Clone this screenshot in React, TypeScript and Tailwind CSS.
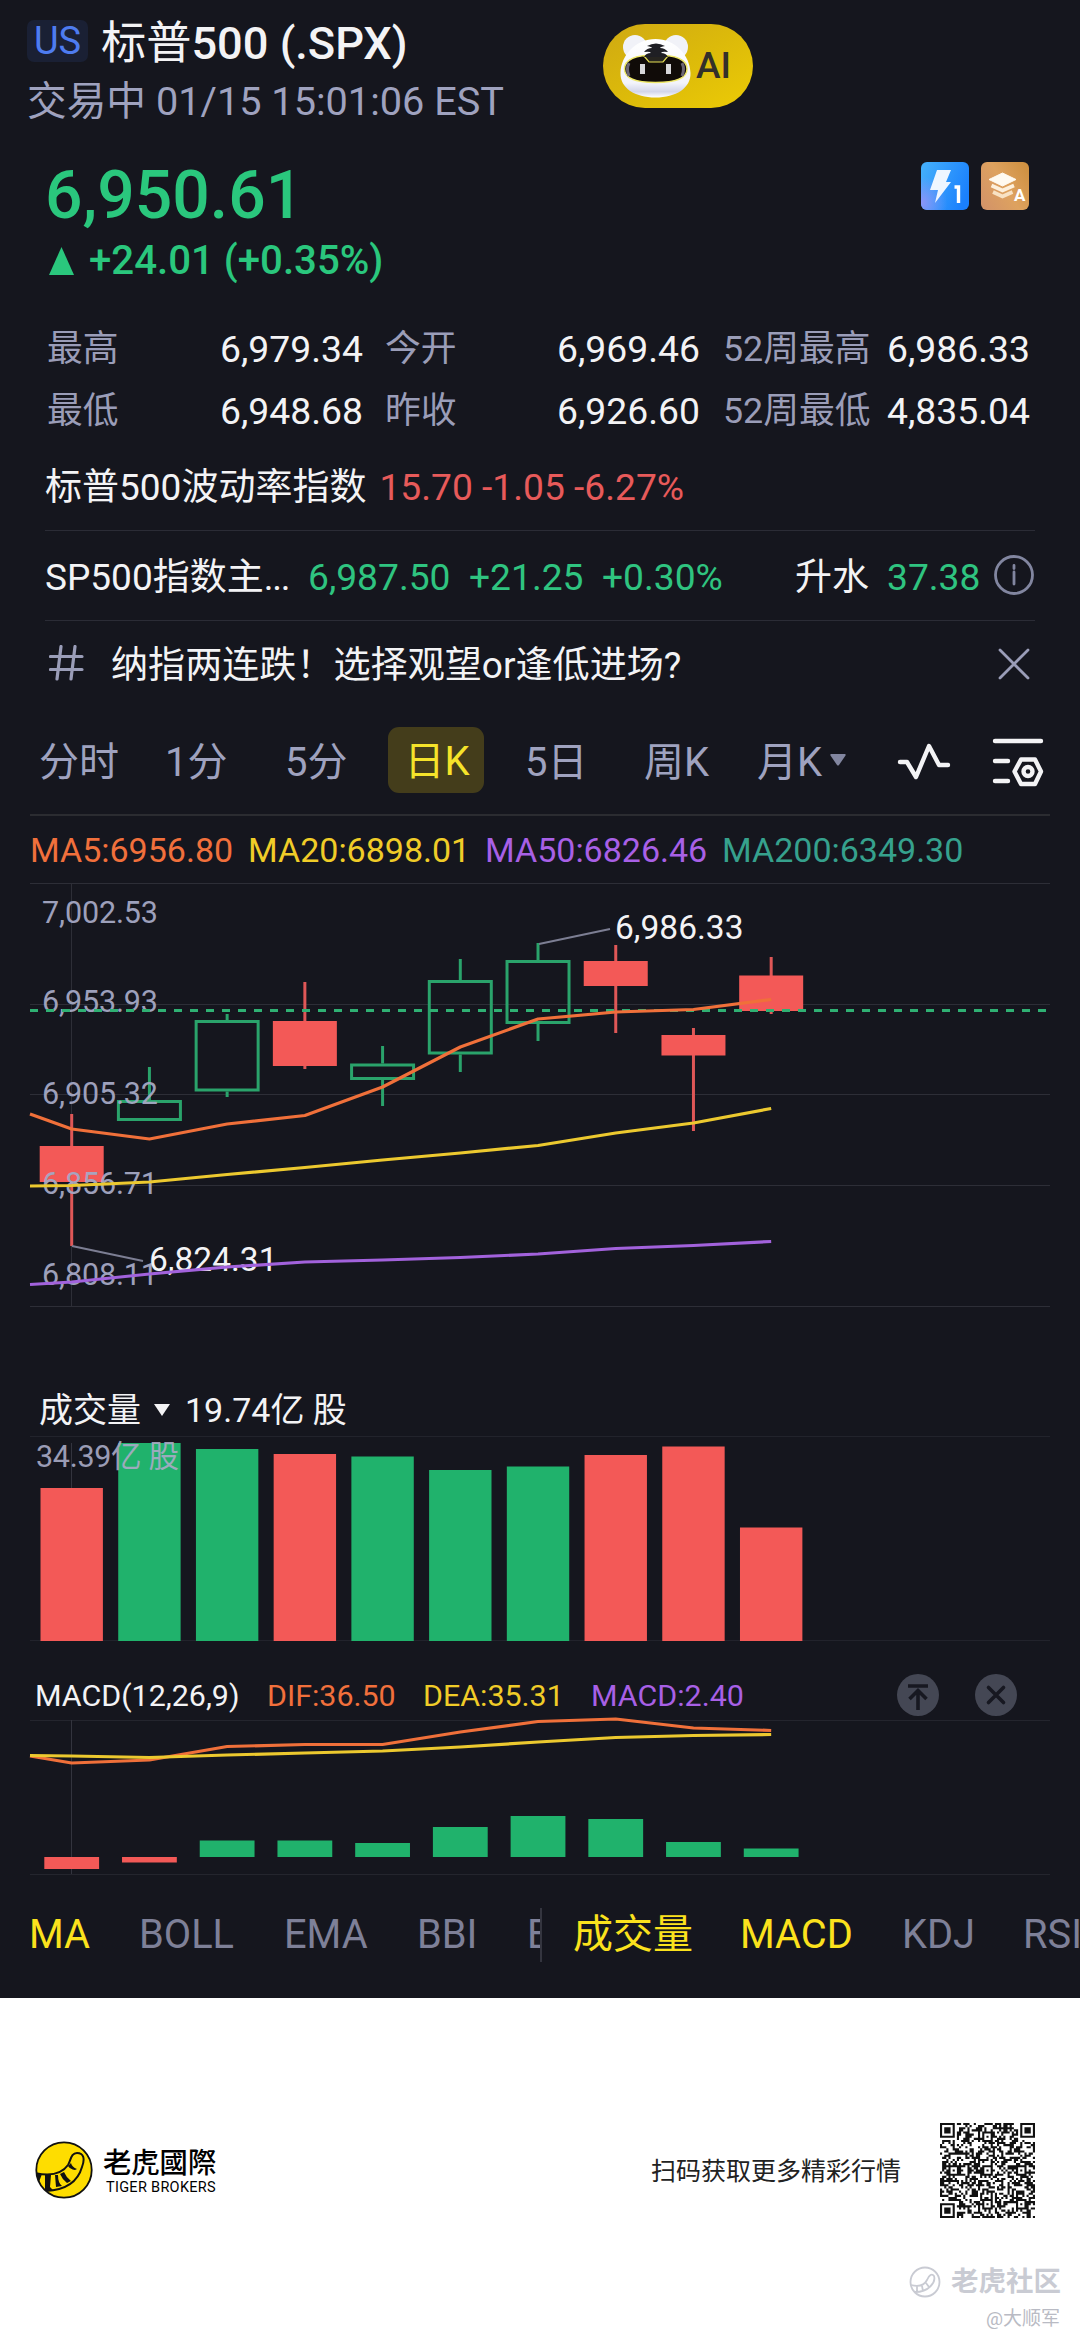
import React from "react";

const ROBOTO = "font-['Roboto','Noto_Sans_CJK_SC',sans-serif]";

const GREEN = "#20b26c";
const RED = "#f35957";
const x0 = 71.7;
const pitch = 77.72;
const cx = (i: number) => x0 + pitch * i;

type Candle = { up: boolean; top: number; bottom: number; high: number; low: number };

const candles: Candle[] = [
  { up: false, top: 1146, bottom: 1182, high: 1114, low: 1246 },
  { up: true, top: 1100, bottom: 1121, high: 1067, low: 1121 },
  { up: true, top: 1020, bottom: 1091.5, high: 1014, low: 1097 },
  { up: false, top: 1021, bottom: 1066, high: 982, low: 1069 },
  { up: true, top: 1063.5, bottom: 1080, high: 1046, low: 1106 },
  { up: true, top: 980, bottom: 1054.5, high: 959, low: 1072 },
  { up: true, top: 960, bottom: 1024, high: 943, low: 1041 },
  { up: false, top: 961, bottom: 986, high: 945, low: 1033 },
  { up: false, top: 1035, bottom: 1055.5, high: 1028, low: 1131 },
  { up: false, top: 975.5, bottom: 1011, high: 957, low: 1014 },
];

const linePoints = (first: number, ys: number[]) =>
  [`30,${first}`, ...ys.map((y, i) => `${cx(i)},${y}`)].join(" ");

const ma5 = linePoints(1114, [1129, 1139, 1124, 1115.5, 1087, 1047, 1019, 1012, 1009.5, 999.5]);
const ma20 = linePoints(1186, [1185.5, 1182, 1174.5, 1167.5, 1160, 1153, 1145.5, 1133, 1123, 1108.5]);
const ma50 = linePoints(1284.5, [1282, 1274, 1267, 1262, 1260, 1257.5, 1254, 1248.5, 1245.5, 1241.5]);
const dif = linePoints(1756, [1763, 1760, 1746.5, 1744.5, 1744.5, 1732, 1721.5, 1719, 1728, 1730.5]);
const dea = linePoints(1755.5, [1756, 1757.5, 1755, 1753, 1751, 1747, 1742, 1737.5, 1735.5, 1734.5]);

const volumes: [boolean, number][] = [
  [false, 1488], [true, 1443], [true, 1449], [false, 1454], [true, 1456.5],
  [true, 1470], [true, 1466.5], [false, 1455], [false, 1446.5], [false, 1527.5],
];

const histogram: [number, number][] = [
  [1857, 1869], [1857, 1862.5], [1840.5, 1857], [1840.5, 1857], [1843, 1857],
  [1827, 1857], [1816, 1857], [1819, 1857], [1842, 1857], [1848.5, 1857],
];

const axis: [string, number][] = [
  ["7,002.53", 923], ["6,953.93", 1012], ["6,905.32", 1103.5], ["6,856.71", 1194], ["6,808.11", 1285],
];

function PriceChart() {
  return (
    <svg className="block" width="1080" height="426" viewBox="0 882 1080 426">
      <g stroke="#2d2e37" strokeWidth="1">
        {[883.5, 1004.5, 1094.5, 1185.5, 1306.5].map((y) => (
          <line key={y} x1="30" x2="1050" y1={y} y2={y} />
        ))}
        <line x1="71.5" x2="71.5" y1="883" y2="1306" />
      </g>
      {candles.map((c, i) => {
        const x = cx(i);
        return c.up ? (
          <g key={i} stroke="#2aa36b" strokeWidth="3" fill="none">
            <line x1={x} x2={x} y1={c.high} y2={c.top} />
            <line x1={x} x2={x} y1={c.bottom} y2={c.low} />
            <rect x={x - 31} y={c.top + 1.5} width="62" height={c.bottom - c.top - 3} />
          </g>
        ) : (
          <g key={i}>
            <line x1={x} x2={x} y1={c.high} y2={c.low} stroke="#df5757" strokeWidth="3" />
            <rect x={x - 32} y={c.top} width="64" height={c.bottom - c.top} fill={RED} />
          </g>
        );
      })}
      <g fontFamily="Roboto" fontSize="30.5" fill="#a5a8c4" opacity="0.95">
        {axis.map(([t, y]) => (
          <text key={t} x="42" y={y} textLength="116">{t}</text>
        ))}
      </g>
      <line x1="30" x2="1049" y1="1010.5" y2="1010.5" stroke="#2fb073" strokeWidth="3" strokeDasharray="8 8" />
      <g stroke="#7c7e93" strokeWidth="2">
        <line x1="539" y1="944" x2="610" y2="929" />
        <line x1="72" y1="1246" x2="143" y2="1261" />
      </g>
      <g fontFamily="Roboto" fontSize="33.5" fill="#f3f3f5">
        <text x="615" y="938.5" textLength="128.5">6,986.33</text>
        <text x="149" y="1270.5" textLength="128.5">6,824.31</text>
      </g>
      <g fill="none" strokeWidth="3.2" strokeLinejoin="round">
        <polyline points={ma5} stroke="#f0703a" />
        <polyline points={ma20} stroke="#ecc92f" />
        <polyline points={ma50} stroke="#a262dc" />
      </g>
    </svg>
  );
}

function VolumeChart() {
  return (
    <svg className="block" width="1080" height="206" viewBox="0 1436 1080 206">
      <g stroke="#22232c" strokeWidth="1">
        <line x1="30" x2="1050" y1="1436.5" y2="1436.5" />
        <line x1="30" x2="1050" y1="1640.5" y2="1640.5" />
        <line x1="71.5" x2="71.5" y1="1443" y2="1488" stroke="#33343e" />
      </g>
      {volumes.map(([up, top], i) => (
        <rect key={i} x={cx(i) - 31.2} y={top} width="62.4" height={1641 - top} fill={up ? GREEN : RED} />
      ))}
      <text x="36" y="1467" fontSize="30.5" fill="#a9abc6" opacity="0.9" textLength="143" fontFamily="Roboto, 'Noto Sans CJK SC'">
        34.39亿 股
      </text>
    </svg>
  );
}

function MacdChart() {
  return (
    <svg className="block overflow-visible" width="1080" height="156" viewBox="0 1720 1080 156">
      <g stroke="#24252e" strokeWidth="1">
        <line x1="30" x2="1050" y1="1720.5" y2="1720.5" />
        <line x1="30" x2="1050" y1="1874.5" y2="1874.5" />
        <line x1="71.5" x2="71.5" y1="1720" y2="1874" stroke="#33343e" />
      </g>
      {histogram.map(([a, b], i) => (
        <rect key={i} x={cx(i) - 27.4} y={a} width="54.8" height={b - a} fill={i < 2 ? RED : GREEN} />
      ))}
      <g fill="none" strokeWidth="3.2" strokeLinejoin="round">
        <polyline points={dif} stroke="#f0703a" />
        <polyline points={dea} stroke="#ecc92f" />
      </g>
    </svg>
  );
}

function TigerBot() {
  return (
    <svg className="ml-[16px] shrink-0" width="74" height="66" viewBox="0 0 74 66">
      <defs>
        <linearGradient id="face" x1="0" y1="0" x2="0" y2="1">
          <stop offset="0" stopColor="#fff" />
          <stop offset="0.75" stopColor="#f3f4fb" />
          <stop offset="0.9" stopColor="#d3d6ea" />
          <stop offset="1" stopColor="#fff" />
        </linearGradient>
      </defs>
      <circle cx="16" cy="14" r="12" fill="#f1f2f8" />
      <circle cx="57" cy="14" r="12" fill="#f1f2f8" />
      <path d="M36.500 6C56 6 71 22 71.500 40C72 55 57 64.500 36.500 64.500C16 64.500 1 55 1.500 40C2 22 17 6 36.500 6Z" fill="url(#face)" />
      <path d="M36.500 22C58 22 68 27 68 36C68 45 56 49.500 36.500 49.500C17 49.500 5.500 45 5.500 36C5.500 27 15 22 36.500 22Z" fill="#100b08" stroke="#efe96a" strokeWidth="1.500" />
      <path d="M10 30Q7 36 10 43M63 30Q66 36 63 43" stroke="#6b6674" strokeWidth="3" fill="none" />
      <path d="M25 23L30 29H44L49 23Z" fill="#26241f" stroke="#e5df55" strokeWidth="1.200" />
      <path d="M28 13Q37 8 46 13Q41 14 41 15Q46 15 49 19Q43 18 42 20Q47 20 49 24H25Q27 20 32 20Q31 18 25 19Q28 15 33 15Q33 14 28 13Z" fill="#1f1f24" />
      <rect x="21" y="31" width="5" height="10" fill="#d7d7da" />
      <rect x="47" y="31" width="5" height="10" fill="#d7d7da" />
    </svg>
  );
}

function LightningBadge() {
  return (
    <svg width="48" height="48" viewBox="0 0 48 48">
      <defs>
        <linearGradient id="blue" x1="0" y1="0.2" x2="1" y2="0.6">
          <stop offset="0" stopColor="#43aefb" />
          <stop offset="1" stopColor="#1a80fd" />
        </linearGradient>
        <radialGradient id="violet" cx="0" cy="0.85" r="0.55">
          <stop offset="0" stopColor="#8c94f8" />
          <stop offset="1" stopColor="#8c94f8" stopOpacity="0" />
        </radialGradient>
      </defs>
      <rect width="48" height="48" rx="6" fill="url(#blue)" />
      <rect width="48" height="48" rx="6" fill="url(#violet)" />
      <path d="M16 8H30L25 20H30L14 41L17 28H9Z" fill="#eef6ff" />
      <path d="M33.500 25H37.500V41" fill="none" stroke="#fff" strokeWidth="3.400" />
    </svg>
  );
}

function LayersBadge() {
  return (
    <svg width="48" height="48" viewBox="0 0 48 48">
      <defs>
        <linearGradient id="amber" x1="0" y1="0.8" x2="1" y2="0.2">
          <stop offset="0" stopColor="#d39468" />
          <stop offset="0.5" stopColor="#dea25f" />
          <stop offset="1" stopColor="#cf9142" />
        </linearGradient>
      </defs>
      <rect width="48" height="48" rx="6" fill="url(#amber)" />
      <path d="M21.500 11L35 17.500L21.500 24L8 17.500Z" fill="#fffaf0" stroke="#fffaf0" strokeLinejoin="round" />
      <path d="M10.500 23.500L21.500 28.500L33 23.500" fill="none" stroke="#fdf0dc" strokeWidth="3.600" />
      <path d="M12 30L21.500 34.500L31.500 30" fill="none" stroke="#f8e2c4" strokeWidth="3.600" />
      <text x="33" y="39" fontFamily="Roboto" fontWeight="700" fontSize="17" fill="#fff">A</text>
    </svg>
  );
}

function Stat({ label, value, width }: { label: string; value: string; width: string }) {
  return (
    <div className={`flex items-center justify-between ${width}`}>
      <span className="text-[35.8px] text-[#9a9db8]">{label}</span>
      <span className="text-[#f3f3f5]">{value}</span>
    </div>
  );
}

const SIZE = 45;

function buildQr(): boolean[][] {
  let seed = 20260115;
  const next = () => {
    seed = (seed * 1103515245 + 12345) % 2147483648;
    return seed / 2147483648;
  };
  const m = Array.from({ length: SIZE }, () => Array.from({ length: SIZE }, () => next() > 0.48));
  const square = (r: number, c: number, n: number, quiet: number) => {
    for (let y = -quiet; y < n + quiet; y++)
      for (let x = -quiet; x < n + quiet; x++) {
        const yy = r + y;
        const xx = c + x;
        if (yy < 0 || xx < 0 || yy >= SIZE || xx >= SIZE) continue;
        const d = Math.min(x, y, n - 1 - x, n - 1 - y);
        m[yy][xx] = d === 0 || d >= 2;
      }
  };
  for (const [r, c] of [[6, 22], [22, 6], [22, 22], [22, 38], [38, 22], [38, 38]]) {
    square(r - 2, c - 2, 5, 0);
  }
  square(0, 0, 7, 1);
  square(0, SIZE - 7, 7, 1);
  square(SIZE - 7, 0, 7, 1);
  return m;
}

const qrPath = buildQr()
  .flatMap((row, y) => row.map((on, x) => (on ? `M${x} ${y}h1v1h-1z` : "")))
  .join("");

function BrandLogo() {
  return (
    <svg className="shrink-0" width="58" height="60" viewBox="0 0 58 60">
      <clipPath id="disc"><circle cx="29" cy="30" r="28" /></clipPath>
      <circle cx="29" cy="30" r="28" fill="#fedd00" />
      <g clipPath="url(#disc)">
        <path d="M0 33Q24 38 33 25C36 20 36 13 42 13C49 13 50 19 47 27C43 41 31 50 11 51" fill="none" stroke="#111" strokeWidth="2" />
        <path d="M1 33L7 34L4 42ZM10 35L16 35L15 47L18 50L10 51ZM20 35L23 35Q23 43 27 46L21 47ZM25 34L29 32Q31 37 36 41L32 43Q27 39 25 34ZM33 26L36 23Q37 27 42 29L40 30Q35 29 33 26Z" fill="#111" />
      </g>
      <circle cx="29" cy="30" r="27.700" fill="none" stroke="#111" strokeWidth="1.800" />
    </svg>
  );
}

export default function App() {
  return (
    <div className={`w-[1080px] h-[2343px] overflow-hidden bg-white whitespace-nowrap ${ROBOTO}`}>
      <main className="h-[1998px] overflow-hidden bg-[#15161e]">
        <header className="flex h-[128px]">
          <div className="w-[603px] pt-[14px]">
            <div className="flex h-[60px] items-center pl-[27px]">
              <span className="-mt-[6px] flex h-[42px] w-[61px] items-center justify-center rounded-[7px] bg-[#1a2034] text-[38px] leading-none text-[#4e7cf0]">US</span>
              <h1 className="ml-[13px] text-[45.2px] font-medium leading-[60px] text-[#f3f3f5]">
                <span className="font-normal">标普</span>500 (.SPX)
              </h1>
            </div>
            <div className="pl-[27px] pt-[1px] text-[39.7px] leading-[54px] text-[#9fa2bf]">交易中 01/15 15:01:06 EST</div>
          </div>
          <div className="mt-[24px] flex h-[84px] w-[150px] items-center rounded-full bg-linear-to-br from-[#cfa912] via-[#dcba0a] to-[#eccb05]">
            <TigerBot />
            <span className="ml-[3px] text-[37px] font-medium text-[#33302a]">AI</span>
          </div>
        </header>

        <section className="flex h-[157px] justify-between pl-[46px] pr-[51px] text-[#2ac77d]">
          <div className="pt-[27px]">
            <div className="-ml-[1px] text-[66px] font-medium leading-[81px]">6,950.61</div>
            <div className="flex items-center text-[40.2px] font-medium leading-[49px]">
              <svg className="ml-[3px] mr-[15px]" width="25" height="28" viewBox="0 0 25 28"><path d="M12.500 0L25 28H0Z" fill="currentColor" /></svg>
              +24.01 (+0.35%)
            </div>
          </div>
          <div className="flex gap-3 pt-[34px]">
            <LightningBadge />
            <LayersBadge />
          </div>
        </section>

        <section className="pl-[47px] pt-[33px] text-[37.3px] leading-[62px]">
          <div className="flex">
            <Stat label="最高" value="6,979.34" width="w-[316px] mr-[22px]" />
            <Stat label="今开" value="6,969.46" width="w-[315px] mr-[23px]" />
            <Stat label="52周最高" value="6,986.33" width="w-[307px]" />
          </div>
          <div className="flex">
            <Stat label="最低" value="6,948.68" width="w-[316px] mr-[22px]" />
            <Stat label="昨收" value="6,926.60" width="w-[315px] mr-[23px]" />
            <Stat label="52周最低" value="4,835.04" width="w-[307px]" />
          </div>
        </section>

        <section className="-mt-[1px] mx-[45px] text-[37px] text-[#f3f3f5]">
          <div className="flex h-[90px] items-center border-b border-[#2b2c36] pt-[4px]">
            <span>标普500波动率指数</span>
            <span className="ml-[13px] text-[37.2px] text-[#e75a5a]">15.70 -1.05 -6.27%</span>
          </div>
          <div className="flex h-[90px] items-center border-b border-[#2b2c36] pt-[4px]">
            <span className="w-[263px]">SP500指数主<span className="tracking-[-1.2px]">...</span></span>
            <span className="w-[161px] text-[37.2px] text-[#2fc480]">6,987.50</span>
            <span className="w-[133px] text-[37.2px] text-[#2fc480]">+21.25</span>
            <span className="w-[193px] text-[37.2px] text-[#2fc480]">+0.30%</span>
            <span className="w-[92px]">升水</span>
            <span className="w-[107px] text-[37.2px] text-[#2fc480]">37.38</span>
            <svg width="40" height="40" viewBox="0 0 40 40" fill="none" stroke="#8286a0" strokeWidth="2.800" className="-mt-[5px]">
              <circle cx="20" cy="20" r="18.500" />
              <path d="M20 17V29M20 10.500V13.500" strokeLinecap="round" />
            </svg>
          </div>
          <div className="flex h-[90px] items-center">
            <svg className="-mt-[6px] ml-[4px]" width="35" height="36" viewBox="0 0 35 36" fill="none" stroke="#9a9db8" strokeWidth="3.200" strokeLinecap="round">
              <path d="M1.500 11.500H33M1.500 24.500H33M12 1.500L8 34M26 1.500L22 34" />
            </svg>
            <span className="ml-[27px] flex-1 text-[37.1px]">纳指两连跌！选择观望or逢低进场?</span>
            <svg className="-mt-[5px] mr-[5px]" width="32" height="32" viewBox="0 0 32 32" fill="none" stroke="#9a9db8" strokeWidth="2.800" strokeLinecap="round">
              <path d="M2 2L30 30M30 2L2 30" />
            </svg>
          </div>
        </section>

        <nav className="mx-[30px] flex h-[105px] items-center border-b-2 border-[#2b2c31] text-[40px] text-[#9fa2bf]">
          <span className="ml-[9px] w-[126px]">分时</span>
          <span className="w-[120px]">1分</span>
          <span className="w-[103px]">5分</span>
          <span className="-mt-[5px] flex h-[66px] w-[96px] items-center justify-center rounded-[11px] bg-[#443d1b] pt-[4px] pl-[2px] text-[#f5e32a]">日K</span>
          <span className="ml-[41px] w-[119px]">5日</span>
          <span className="w-[113px]">周K</span>
          <span className="w-[73px]">月K</span>
          <svg className="-mt-[6px]" width="16" height="12" viewBox="0 0 16 12"><path d="M1 0H15Q16 0 15.500 1.500L9 11Q8 12 7 11L.5 1.500Q0 0 1 0Z" fill="#8286a0" /></svg>
          <svg className="ml-[51px] -mt-[1px]" width="54" height="40" viewBox="0 0 54 40" fill="none" stroke="#f3f3f5" strokeWidth="4.400" strokeLinecap="round" strokeLinejoin="round">
            <path d="M3 20H10L19 35L32 4L42 23H51" />
          </svg>
          <svg className="ml-[41px] -mt-[2px]" width="52" height="52" viewBox="0 0 52 52" fill="none" stroke="#f3f3f5" strokeWidth="4.400" strokeLinecap="round" strokeLinejoin="round">
            <path d="M3 5H49M3 25H16M3 45H16" />
            <path d="M29 23.500H43L49 35.500L43 48H29L22.500 35.500Z" />
            <circle cx="36" cy="35.500" r="4.500" />
          </svg>
        </nav>

        <div className="flex h-[66px] items-center pl-[30px] pt-[2px] text-[34px]">
          <span className="w-[218px] text-[#f1703c]">MA5:6956.80</span>
          <span className="w-[237px] text-[#f0cc28]">MA20:6898.01</span>
          <span className="w-[237px] text-[#a860e6]">MA50:6826.46</span>
          <span className="text-[#36a18d]">MA200:6349.30</span>
        </div>
        <PriceChart />

        <div className="mt-[76px] flex h-[52px] items-center pl-[39px] text-[34px] text-[#f3f3f5]">
          <span>成交量</span>
          <svg className="ml-[13px] mr-[15px]" width="16" height="12" viewBox="0 0 16 12"><path d="M0 0H16L8 12Z" fill="currentColor" /></svg>
          <span className="pt-[1px]">19.74亿 股</span>
        </div>
        <VolumeChart />

        <div className="mt-[30px] flex h-[48px] items-center pl-[35px] text-[30.4px]">
          <span className="w-[232px] text-[#f3f3f5]">MACD(12,26,9)</span>
          <span className="w-[156px] text-[#f1703c]">DIF:36.50</span>
          <span className="w-[168px] text-[#f0cc28]">DEA:35.31</span>
          <span className="w-[306px] text-[#a860e6]">MACD:2.40</span>
          <svg className="-mt-[2px]" width="42" height="42" viewBox="0 0 42 42" fill="none" stroke="#171821" strokeWidth="3.600">
            <circle cx="21" cy="21" r="21" fill="#444754" stroke="none" />
            <path d="M11 12H31M21 36V17M12.500 25L21 16.500L29.500 25" />
          </svg>
          <svg className="-mt-[2px] ml-[36px]" width="42" height="42" viewBox="0 0 42 42" fill="none" stroke="#171821" strokeWidth="3.600" strokeLinecap="round">
            <circle cx="21" cy="21" r="21" fill="#444754" stroke="none" />
            <path d="M13.500 13.500L28.500 28.500M28.500 13.500L13.500 28.500" />
          </svg>
        </div>
        <MacdChart />

        <div className="flex h-[116px] items-center pt-[1px] text-[39.8px] text-[#7e8098]">
          <div className="flex h-[54px] w-[542px] items-center overflow-hidden border-r-2 border-[#34353f] pl-[29px]">
            <span className="w-[110px] shrink-0 text-[#fbe21d]">MA</span>
            <span className="w-[145px] shrink-0">BOLL</span>
            <span className="w-[133px] shrink-0">EMA</span>
            <span className="w-[110px] shrink-0">BBI</span>
            <span className="shrink-0">E</span>
          </div>
          <div className="flex w-[538px] overflow-hidden pl-[31px]">
            <span className="w-[167px] shrink-0 text-[40px] text-[#fbe21d]">成交量</span>
            <span className="w-[162px] shrink-0 text-[#fbe21d]">MACD</span>
            <span className="w-[121px] shrink-0">KDJ</span>
            <span className="shrink-0">RSI</span>
          </div>
        </div>
      </main>

      <footer className="h-[345px] pt-[124px]">
        <div className="flex h-[96px] items-center pl-[35px] pr-[45px]">
          <BrandLogo />
          <div className="ml-[10px] flex flex-col pt-[1px] text-black">
            <span className="text-[28.3px] leading-[34px] font-medium font-['Noto_Sans_CJK_TC',sans-serif]">老虎國際</span>
            <span className="pl-[3px] text-[14.5px] leading-[20px] tracking-[0.3px]">TIGER BROKERS</span>
          </div>
          <span className="ml-auto pt-[3px] text-[25px] text-[#222]">扫码获取更多精彩行情</span>
          <svg className="ml-[39px]" width="95" height="95" viewBox="0 0 45 45"><path d={qrPath} fill="#111" /></svg>
        </div>
        <div className="mt-[42px] flex h-[44px] items-center justify-end pr-[19px]">
          <svg width="32" height="32" viewBox="0 0 32 32" fill="none" stroke="#c9cbd3" strokeWidth="1.800">
            <circle cx="16" cy="16" r="14.500" />
            <path d="M2 19Q14 22 18 14C20 9 23 7 25 10C27 16 20 26 6 26M8 20V26M13 20L14 25M17 17L20 21" />
          </svg>
          <span className="ml-[10px] text-[27.5px] font-bold leading-[40px] text-[#c9cbd3]">老虎社区</span>
        </div>
        <div className="pr-[20px] pt-[2px] text-right text-[19px] leading-[26px] text-[#b9bbc4]">@大顺军</div>
      </footer>
    </div>
  );
}
